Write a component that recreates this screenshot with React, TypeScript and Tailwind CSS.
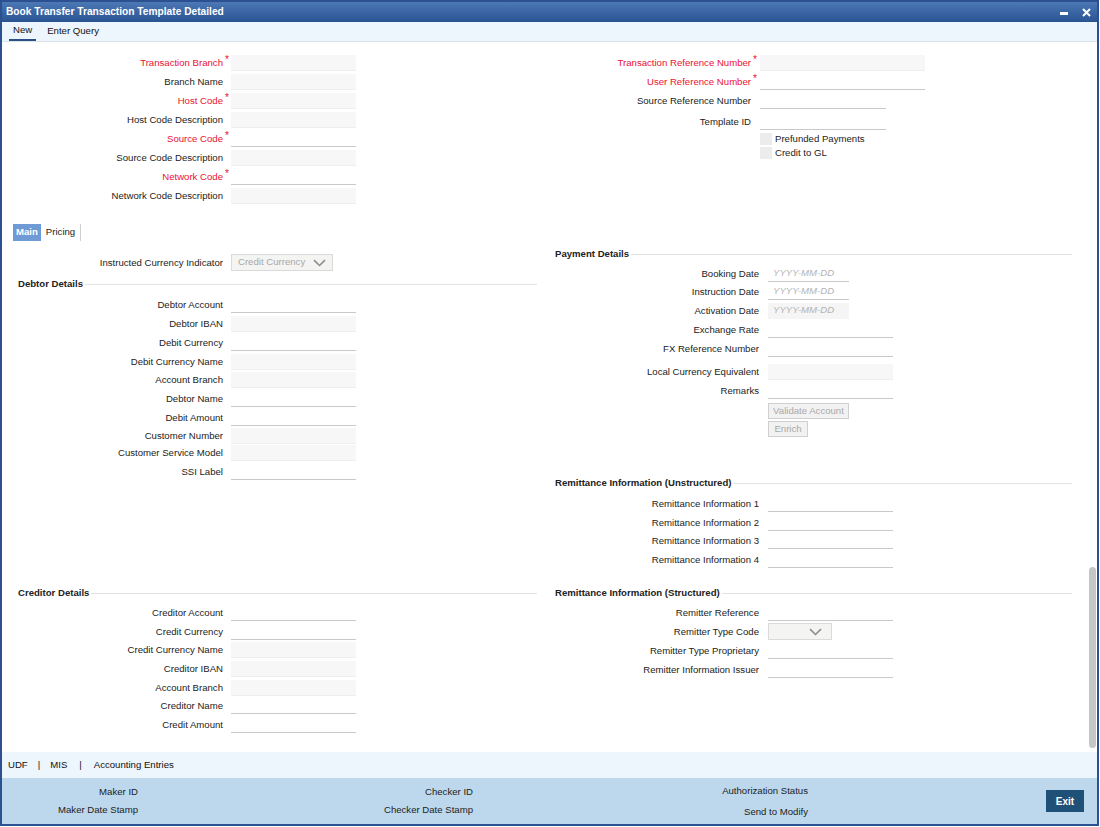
import React from 'react';

type Kind = 'ro' | 'ed' | 'date' | 'date-ro';

interface FieldProps {
  label: string;
  required?: boolean;
  kind?: Kind;
  labelW: string;
  inputW: string;
  slotW?: string;
  rowH?: string;
  extra?: string;
}

const Chevron: React.FC<{ className?: string }> = ({ className }) => (
  <svg className={className} width="13" height="8" viewBox="0 0 13 8" fill="none">
    <path d="M1 1.2 L6.5 6.5 L12 1.2" stroke="#8d8d8d" strokeWidth="1.6" />
  </svg>
);

const Field: React.FC<FieldProps> = ({ label, required, kind = 'ed', labelW, inputW, slotW = 'w-[9px]', rowH = 'h-[19px]', extra = '' }) => {
  let box = '';
  if (kind === 'ro') box = 'h-[16px] bg-[#f7f7f7] border-b border-[#eeeeee]';
  if (kind === 'ed') box = 'h-[16px] border-b border-[#c9c9c9]';
  if (kind === 'date') box = 'h-[16px] border-b border-[#c9c9c9] pl-[5px] italic text-[#b3b3b3]';
  if (kind === 'date-ro') box = 'h-[16px] bg-[#f5f5f5] pl-[5px] italic text-[#b3b3b3]';
  return (
    <div className={`flex items-center ${rowH} ${extra}`}>
      <div className={`${labelW} text-right pt-[1px] ${required ? 'text-[#ea1033]' : 'text-[#222]'}`}>{label}</div>
      <div className={`${slotW} h-full relative`}>
        {required && <span className="absolute left-[2px] top-[2px] text-[10px] leading-none text-[#ea1033]">*</span>}
      </div>
      <div className={`${inputW} ${box} flex items-center`}>
        {(kind === 'date' || kind === 'date-ro') && 'YYYY-MM-DD'}
      </div>
    </div>
  );
};

const Heading: React.FC<{ text: string; extra?: string }> = ({ text, extra = '' }) => (
  <div className={`flex items-center h-[14px] ${extra}`}>
    <span className="font-bold text-[#222] pr-[2px]">{text}</span>
    <div className="flex-1 border-t border-[#e3e3e3]" />
  </div>
);

const L = 'w-[221px]';
const LI = 'w-[125px]';
const LS = 'w-[8px]';
const R = 'w-[211px]';

export default function App() {
  return (
    <div className="w-full h-[827px] bg-white font-['Liberation_Sans',Arial,sans-serif] text-[9.6px] text-[#222]">
      <div className="w-[1099px] h-[826px] border-2 border-[#2b5190] flex flex-col bg-white">
        {/* title bar */}
        <div className="h-[20px] flex items-center bg-gradient-to-b from-[#4c78b5] to-[#2a5392] text-white">
          <span className="pl-[4px] font-bold text-[10.2px]">Book Transfer Transaction Template Detailed</span>
          <div className="ml-auto flex items-center gap-[14px] pr-[6px]">
            <div className="w-[8px] h-[3px] bg-white mt-[2px]" />
            <svg width="9" height="9" viewBox="0 0 9 9">
              <path d="M1 1 L8 8 M8 1 L1 8" stroke="white" strokeWidth="2" />
            </svg>
          </div>
        </div>

        {/* tabs */}
        <div className="h-[20px] flex items-end bg-[#edf5fd] border-b border-[#dbe3eb] pl-[7px]">
          <div className="px-[4px] h-[19px] flex items-center border-b-2 border-[#2c5084] text-[#111]">New</div>
          <div className="ml-[11px] h-[19px] flex items-center text-[#111]">Enter Query</div>
        </div>

        {/* content */}
        <div className="flex-1 relative overflow-hidden">
          {/* header block */}
          <div className="flex mt-[11px]">
            <div className="w-[546px]">
              <Field label="Transaction Branch" required kind="ro" labelW={L} slotW={LS} inputW={LI} />
              <Field label="Branch Name" kind="ro" labelW={L} slotW={LS} inputW={LI} />
              <Field label="Host Code" required kind="ro" labelW={L} slotW={LS} inputW={LI} />
              <Field label="Host Code Description" kind="ro" labelW={L} slotW={LS} inputW={LI} />
              <Field label="Source Code" required kind="ed" labelW={L} slotW={LS} inputW={LI} />
              <Field label="Source Code Description" kind="ro" labelW={L} slotW={LS} inputW={LI} />
              <Field label="Network Code" required kind="ed" labelW={L} slotW={LS} inputW={LI} />
              <Field label="Network Code Description" kind="ro" labelW={L} slotW={LS} inputW={LI} />
            </div>
            <div className="flex-1">
              <Field label="Transaction Reference Number" required kind="ro" labelW="w-[203px]" inputW="w-[165px]" />
              <Field label="User Reference Number" required kind="ed" labelW="w-[203px]" inputW="w-[165px]" />
              <Field label="Source Reference Number" kind="ed" labelW="w-[203px]" inputW="w-[126px]" />
              <Field label="Template ID" kind="ed" labelW="w-[203px]" inputW="w-[126px]" extra="mt-[2px]" />
              <div className="flex items-center h-[14px] pl-[212px] mt-[1px]">
                <div className="w-[12px] h-[12px] bg-[#ececec]" />
                <span className="ml-[3px]">Prefunded Payments</span>
              </div>
              <div className="flex items-center h-[14px] pl-[212px]">
                <div className="w-[12px] h-[12px] bg-[#ececec]" />
                <span className="ml-[3px]">Credit to GL</span>
              </div>
            </div>
          </div>

          {/* sub tabs */}
          <div className="flex items-center h-[17px] mt-[19px] pl-[11px]">
            <div className="h-[17px] px-[3px] flex items-center bg-[#6e9ad6] text-white font-bold">Main</div>
            <div className="pl-[5px] pr-[5px] h-[17px] flex items-center">Pricing</div>
            <div className="w-px h-[17px] bg-[#cfcfcf]" />
          </div>

          {/* upper row */}
          <div className="flex items-start h-[329px]">
            <div className="w-[546px] pr-[11px]">
              <div className="flex items-center h-[19px] mt-[12px]">
                <div className={`${L} text-right pt-[1px]`}>Instructed Currency Indicator</div>
                <div className="w-[8px]" />
                <div className="w-[102px] h-[17px] border border-[#dadada] bg-[#f4f4f2] flex items-center pl-[6px] text-[#a8a8a8]">
                  Credit Currency
                  <Chevron className="ml-auto mr-[6px]" />
                </div>
              </div>
              <Heading text="Debtor Details" extra="mt-[5px] pl-[16px]" />
              <div className="mt-[4px]">
                <Field label="Debtor Account" kind="ed" labelW={L} slotW={LS} inputW={LI} />
                <Field label="Debtor IBAN" kind="ro" labelW={L} slotW={LS} inputW={LI} />
                <Field label="Debit Currency" kind="ed" labelW={L} slotW={LS} inputW={LI} />
                <Field label="Debit Currency Name" kind="ro" labelW={L} slotW={LS} inputW={LI} />
                <Field label="Account Branch" kind="ro" labelW={L} slotW={LS} inputW={LI} rowH="h-[18px]" />
                <Field label="Debtor Name" kind="ed" labelW={L} slotW={LS} inputW={LI} />
                <Field label="Debit Amount" kind="ed" labelW={L} slotW={LS} inputW={LI} />
                <Field label="Customer Number" kind="ro" labelW={L} slotW={LS} inputW={LI} rowH="h-[18px]" />
                <Field label="Customer Service Model" kind="ro" labelW={L} slotW={LS} inputW={LI} rowH="h-[16px]" />
                <Field label="SSI Label" kind="ed" labelW={L} slotW={LS} inputW={LI} rowH="h-[21px]" />
              </div>
            </div>
            <div className="flex-1 pr-[25px]">
              <Heading text="Payment Details" extra="mt-[6px] pl-[7px]" />
              <div className="mt-[4px]">
                <Field label="Booking Date" kind="date" labelW={R} inputW="w-[81px]" rowH="h-[17px]" />
                <Field label="Instruction Date" kind="date" labelW={R} inputW="w-[81px]" />
                <Field label="Activation Date" kind="date-ro" labelW={R} inputW="w-[81px]" />
                <Field label="Exchange Rate" kind="ed" labelW={R} inputW={LI} />
                <Field label="FX Reference Number" kind="ed" labelW={R} inputW={LI} />
                <Field label="Local Currency Equivalent" kind="ro" labelW={R} inputW={LI} extra="mt-[4px]" />
                <Field label="Remarks" kind="ed" labelW={R} inputW={LI} />
                <div className="pl-[220px] mt-[3px]">
                  <div className="w-[81px] h-[16px] border border-[#cfcfcf] bg-[#f2f2f2] text-[#a9a9a9] flex items-center justify-center">Validate Account</div>
                  <div className="w-[40px] h-[16px] mt-[2px] border border-[#cfcfcf] bg-[#f2f2f2] text-[#a9a9a9] flex items-center justify-center">Enrich</div>
                </div>
              </div>
              <Heading text="Remittance Information (Unstructured)" extra="mt-[39px] pl-[7px]" />
              <div className="mt-[4px]">
                <Field label="Remittance Information 1" kind="ed" labelW={R} inputW={LI} />
                <Field label="Remittance Information 2" kind="ed" labelW={R} inputW={LI} />
                <Field label="Remittance Information 3" kind="ed" labelW={R} inputW={LI} rowH="h-[18px]" />
                <Field label="Remittance Information 4" kind="ed" labelW={R} inputW={LI} />
              </div>
            </div>
          </div>

          {/* lower row */}
          <div className="flex items-start mt-[16px]">
            <div className="w-[546px] pr-[11px]">
              <Heading text="Creditor Details" extra="pl-[16px]" />
              <div className="mt-[3px]">
                <Field label="Creditor Account" kind="ed" labelW={L} slotW={LS} inputW={LI} />
                <Field label="Credit Currency" kind="ed" labelW={L} slotW={LS} inputW={LI} />
                <Field label="Credit Currency Name" kind="ro" labelW={L} slotW={LS} inputW={LI} rowH="h-[18px]" />
                <Field label="Creditor IBAN" kind="ro" labelW={L} slotW={LS} inputW={LI} />
                <Field label="Account Branch" kind="ro" labelW={L} slotW={LS} inputW={LI} />
                <Field label="Creditor Name" kind="ed" labelW={L} slotW={LS} inputW={LI} rowH="h-[18px]" />
                <Field label="Credit Amount" kind="ed" labelW={L} slotW={LS} inputW={LI} />
              </div>
            </div>
            <div className="flex-1 pr-[25px]">
              <Heading text="Remittance Information (Structured)" extra="pl-[7px]" />
              <div className="mt-[3px]">
                <Field label="Remitter Reference" kind="ed" labelW={R} inputW={LI} />
                <div className="flex items-center h-[19px]">
                  <div className={`${R} text-right pt-[1px]`}>Remitter Type Code</div>
                  <div className="w-[9px]" />
                  <div className="w-[64px] h-[17px] border border-[#dadada] bg-[#f4f4f2] flex items-center">
                    <Chevron className="ml-auto mr-[9px]" />
                  </div>
                </div>
                <Field label="Remitter Type Proprietary" kind="ed" labelW={R} inputW={LI} extra="mt-[1px]" rowH="h-[18px]" />
                <Field label="Remitter Information Issuer" kind="ed" labelW={R} inputW={LI} />
              </div>
            </div>
          </div>

          {/* scrollbar */}
          <div className="absolute right-[1px] top-[525px] w-[7px] h-[181px] rounded-[4px] bg-[#c6c6c6]" />
        </div>

        {/* bottom tabs */}
        <div className="h-[26px] flex items-center bg-[#edf5fd] pl-[6px] text-[#111]">
          <span>UDF</span>
          <span className="mx-[10px]">|</span>
          <span>MIS</span>
          <span className="mx-[12px]">|</span>
          <span>Accounting Entries</span>
        </div>

        {/* footer */}
        <div className="h-[46px] flex items-center bg-[#bdd8ec] text-[#222]">
          <div className="flex flex-col gap-[4px] w-[136px] text-right">
            <span>Maker ID</span>
            <span>Maker Date Stamp</span>
          </div>
          <div className="flex flex-col gap-[4px] w-[335px] text-right">
            <span>Checker ID</span>
            <span>Checker Date Stamp</span>
          </div>
          <div className="flex flex-col gap-[7px] w-[335px] text-right pt-[1px]">
            <span>Authorization Status</span>
            <span>Send to Modify</span>
          </div>
          <div className="ml-auto mr-[13px] w-[38px] h-[22px] bg-[#1f5078] text-white font-bold text-[10px] flex items-center justify-center">
            Exit
          </div>
        </div>
      </div>
    </div>
  );
}
